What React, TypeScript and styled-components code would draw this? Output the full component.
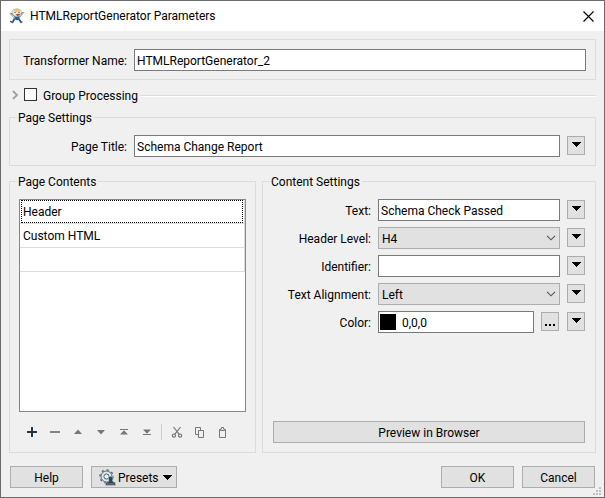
import React from "react";
import styled, { createGlobalStyle, css } from "styled-components";

const GlobalStyle = createGlobalStyle`
  *, *::before, *::after { box-sizing: border-box; }
  body { margin: 0; background: #f0f0f0; }
  body, button, input, select {
    font-family: Roboto, "Open Sans", sans-serif;
    font-size: 12px;
    line-height: 16px;
    color: #000;
  }
`;

const Dialog = styled.main`
  display: flex;
  flex-direction: column;
  min-height: 100vh;
  border: 1px solid #6b6b6b;
  background: #f0f0f0;
`;

const TitleBar = styled.header`
  display: flex;
  align-items: center;
  height: 30px;
  padding: 0 8px;
  gap: 5px;
  background: #fff;
`;

const Title = styled.h1`
  flex: 1;
  margin: 0;
  font-size: 12px;
  font-weight: 400;
  line-height: 16px;
`;

const CloseButton = styled.button`
  display: flex;
  padding: 2px;
  border: 0;
  background: none;
`;

const Body = styled.form`
  position: relative;
  flex: 1;
  display: flex;
  flex-direction: column;
  padding: 8px 8px 9px;
`;

const Panel = styled.div`
  padding: 9px 9px 8px 10px;
  border: 1px solid #dcdcdc;
`;

const Group = styled.fieldset<{ $inset?: number; $bottom?: number }>`
  display: flex;
  flex-direction: column;
  min-width: 0;
  margin: 0;
  padding: 9px ${(p) => p.$inset ?? 10}px ${(p) => p.$bottom ?? 9}px;
  border: 1px solid #dcdcdc;
`;

const Legend = styled.legend<{ $inset?: number }>`
  margin-left: ${(p) => (p.$inset === 9 ? -2 : -3)}px;
  padding: 2px 2px 0 1px;
  line-height: 15px;
`;

const Field = styled.div<{ $label: number }>`
  display: grid;
  grid-template-columns: ${(p) => p.$label}px minmax(0, 1fr);
  align-items: center;
  column-gap: 7px;
`;

const FieldLabel = styled.label`
  padding-top: 2px;
  text-align: right;
  white-space: nowrap;
`;

const Controls = styled.div`
  display: flex;
  align-items: center;
  gap: 7px;
`;

const boxed = css`
  flex: 1;
  width: 100%;
  min-width: 0;
  height: 22px;
  border: 1px solid #7a7a7a;
  border-radius: 0;
  outline: 0;
  background: #fff;
`;

const TextInput = styled.input`
  ${boxed}
  padding: 2px 2px 0;
`;

const SelectWrap = styled.div`
  flex: 1;
  display: grid;
  align-items: center;
  > * { grid-area: 1 / 1; }
  > svg { justify-self: end; margin-right: 4px; pointer-events: none; }
`;

const Select = styled.select`
  ${boxed}
  appearance: none;
  padding: 2px 20px 0 3px;
  border-color: #adadad;
  background: #e1e1e1;
`;

const ColorBox = styled.div`
  ${boxed}
  display: flex;
  align-items: center;
  gap: 4px;
  padding: 0 1px;
`;

const Swatch = styled.span`
  width: 16px;
  height: 16px;
  background: #000;
`;

const ColorInput = styled.input`
  flex: 1;
  min-width: 0;
  padding: 2px 2px 0;
  border: 0;
  outline: 0;
`;

const PushButton = styled.button<{ $width?: number }>`
  display: flex;
  align-items: center;
  justify-content: center;
  width: ${(p) => (p.$width ? `${p.$width}px` : "100%")};
  height: 22px;
  padding: 2px 0 0;
  border: 1px solid #adadad;
  background: #e1e1e1;
`;

const SmallButton = styled(PushButton)`
  flex: none;
  width: 18px;
  height: 19px;
  margin-bottom: 1px;
  padding: 0 0 2px;
`;

const BrowseButton = styled(SmallButton)`
  align-items: flex-end;
  margin-right: 1px;
  padding-bottom: 4px;
`;

const GroupRow = styled.div`
  display: flex;
  align-items: center;
  height: 29px;
  padding-left: 3px;
`;

const GroupLabel = styled.label`
  padding-top: 2px;
`;

const Check = styled.input`
  appearance: none;
  width: 13px;
  height: 13px;
  margin: 0 6px 0 5px;
  border: 1px solid #333;
  background: #fff;
`;

const Rule = styled.hr`
  flex: 1;
  height: 2px;
  margin: 2px 0 0 2px;
  border: 0;
  border-top: 1px solid #dcdcdc;
  border-bottom: 1px solid #fff;
`;

const Columns = styled.div`
  flex: 1;
  display: grid;
  grid-template-columns: 247fr 334fr;
  gap: 6px;
  margin-top: 7px;
`;

const ContentList = styled.ul`
  flex: 1;
  margin: 0 0 9px;
  padding: 0;
  border: 1px solid #828790;
  background: #fff;
  list-style: none;
`;

const ContentItem = styled.li<{ $focused?: boolean }>`
  height: 24px;
  padding: 0 1px;
  border: solid #dcdcdc;
  border-width: 0 1px 1px 0;

  > span {
    display: block;
    height: 23px;
    padding: 0 1px;
    border: 1px ${(p) => (p.$focused ? "dotted #000" : "solid transparent")};
    line-height: 23px;
  }
`;

const ToolBar = styled.div`
  display: flex;
  align-items: center;
  height: 22px;
  padding-left: 1px;
`;

const ToolButton = styled.button`
  display: flex;
  justify-content: center;
  width: 23px;
  padding: 0;
  border: 0;
  background: none;
`;

const ToolDivider = styled.span`
  width: 1px;
  height: 16px;
  margin: 0 3px;
  background: #cfcfcf;
`;

const SettingsRows = styled.div`
  display: grid;
  gap: 6px;
  margin-bottom: auto;
`;

const Footer = styled.footer`
  display: flex;
  gap: 8px;
  margin-top: 13px;
  padding: 0 1px;
`;

const Spacer = styled.span`
  flex: 1;
`;

const PresetsButton = styled(PushButton)`
  justify-content: flex-start;
  padding: 0 0 0 7px;
  > span { flex: 1; padding: 2px 0 0 2px; text-align: left; }
  > svg:last-child { margin-right: 4px; }
`;

const Grip = styled.svg`
  position: absolute;
  right: 3px;
  bottom: 2px;
`;

const DownTriangle = () => (
  <svg width="9" height="5" viewBox="0 0 9 5" shapeRendering="crispEdges">
    <path d="M0 0H9V1H8V2H7V3H6V4H5V5H4V4H3V3H2V2H1V1H0Z" fill="#000" />
  </svg>
);

const Chevron = () => (
  <svg width="10" height="6" viewBox="0 0 10 6">
    <path d="M1 .8 5 4.8 9 .8" fill="none" stroke="#555" strokeWidth="1.1" />
  </svg>
);

const MascotIcon = () => (
  <svg width="16" height="16" viewBox="0 0 16 16">
    <path d="M5.5 10.5 3.6 14.3M9.5 10.5 12 14.2" stroke="#2459a8" strokeWidth="1.8" />
    <path d="M5.5 8H10.5V11L8 12.5 5.5 11Z" fill="#2c5ca6" />
    <path d="M.3 5.2 2.6 4.7 6 8.2 4.7 9.8ZM15.4 4.2 13 4.2 9.5 8 11 9.5Z" fill="#777" />
    <path d="M1.2 5.8 5 9M14.5 4.8 11 8.5" stroke="#eadcc6" />
    <path d="M3 3.7Q4 .6 8 .7T12.5 4L11.8 7Q8 10.3 4.2 7Z" fill="#e8ebea" stroke="#a89e8e" strokeWidth=".6" />
    <path d="M4.3 2.7Q7.5-.6 11.5 2.7L10 3.7H6Z" fill="#edc25c" />
    <path d="M5 4.5H7M9 4.5H11" stroke="#8a949a" />
    <path d="M6.5 6.8Q8.5 5.4 11.5 6L9 8.2Z" fill="#d53c27" />
    <path d="M1 13.2 3.8 14.8M11.5 14.8 13.4 13.5" stroke="#665447" strokeWidth="1.4" />
  </svg>
);

const PresetIcon = () => (
  <svg width="17" height="17" viewBox="0 0 17 17">
    <circle cx="7.5" cy="7.5" r="5.5" fill="#dce8ec" stroke="#4d626e" strokeWidth="1" />
    <circle cx="7.5" cy="7.5" r="6.6" fill="none" stroke="#4d626e" strokeWidth="1.3" strokeDasharray="2.2 2.98" />
    <circle cx="7.5" cy="7.5" r="2.6" fill="#efefef" stroke="#4d626e" strokeWidth="1" />
    <path d="M6.6 16.4V13.8L9.8 12.2Q8.5 7.2 11.7 7.2T13.6 12.2L16.6 13.8V16.4Z" fill="#2d4656" stroke="#e1e1e1" strokeWidth=".5" />
    <path d="M8 14.9H15.4" stroke="#8299a5" strokeWidth=".8" />
  </svg>
);

const toolIcons: Record<string, React.ReactNode> = {
  Add: <path d="M3 8H13M8 3V13" stroke="#213746" strokeWidth="2" />,
  Remove: <path d="M3 8H13" stroke="#858585" strokeWidth="2" />,
  "Move up": <path d="M4 10 8 5.6 12 10Z" fill="#777" />,
  "Move down": <path d="M4 6 8 10.4 12 6Z" fill="#777" />,
  "Move to top": <path d="M4 5H12V6H4ZM4 10.4 8 6.2 12 10.4Z" fill="#777" />,
  "Move to bottom": <path d="M4 10H12V11H4ZM4 5.6 8 9.8 12 5.6Z" fill="#777" />,
};

const editIcons: Record<string, React.ReactNode> = {
  Cut: (
    <g fill="none" stroke="#777" strokeWidth="1.2">
      <path d="M4.5 3 10.3 10.3M11.5 3 5.7 10.3" />
      <circle cx="4.9" cy="11.6" r="1.6" />
      <circle cx="11.1" cy="11.6" r="1.6" />
    </g>
  ),
  Copy: (
    <g fill="#f0f0f0" stroke="#777">
      <path d="M3.5 3.5H8.5V10.5H3.5Z" />
      <path d="M6.5 6.5H11.5V13.5H6.5Z" />
    </g>
  ),
  Paste: (
    <g fill="none" stroke="#777">
      <path d="M4.5 5.5H10.5V13.5H4.5Z" />
      <path d="M5.5 6.5V5H6.5V3.5H8.5V5H9.5V6.5Z" fill="#f0f0f0" />
    </g>
  ),
};

const renderTools = (icons: Record<string, React.ReactNode>) =>
  Object.entries(icons).map(([name, drawing]) => (
    <ToolButton key={name} type="button" aria-label={name}>
      <svg width="16" height="16" viewBox="0 0 16 16">{drawing}</svg>
    </ToolButton>
  ));

const MenuButton = ({ label }: { label: string }) => (
  <SmallButton type="button" aria-label={`${label} options`}>
    <DownTriangle />
  </SmallButton>
);

interface SettingProps {
  id: string;
  label: string;
  labelWidth?: number;
  children: React.ReactNode;
}

const Setting = ({ id, label, labelWidth = 98, children }: SettingProps) => (
  <Field $label={labelWidth}>
    <FieldLabel htmlFor={id}>{label}:</FieldLabel>
    <Controls>
      {children}
      <MenuButton label={label} />
    </Controls>
  </Field>
);

export default function App() {
  return (
    <>
      <GlobalStyle />
      <Dialog>
        <TitleBar>
          <MascotIcon />
          <Title>HTMLReportGenerator Parameters</Title>
          <CloseButton type="button" aria-label="Close">
            <svg width="11" height="11" viewBox="0 0 11 11">
              <path d="M.5.5 10.5 10.5M10.5.5.5 10.5" stroke="#000" strokeWidth="1.1" />
            </svg>
          </CloseButton>
        </TitleBar>
        <Body onSubmit={(e) => e.preventDefault()}>
          <Panel>
            <Field $label={107}>
              <FieldLabel htmlFor="name">Transformer Name:</FieldLabel>
              <TextInput id="name" defaultValue="HTMLReportGenerator_2" />
            </Field>
          </Panel>

          <GroupRow>
            <svg width="7" height="10" viewBox="0 0 7 10">
              <path d="M1 1 5 5 1 9" fill="none" stroke="#a0a0a0" strokeWidth="1.8" />
            </svg>
            <Check id="group" type="checkbox" />
            <GroupLabel htmlFor="group">Group Processing</GroupLabel>
            <Rule />
          </GroupRow>

          <Group $bottom={8}>
            <Legend>Page Settings</Legend>
            <Setting id="title" label="Page Title" labelWidth={107}>
              <TextInput id="title" defaultValue="Schema Change Report" />
            </Setting>
          </Group>

          <Columns>
            <Group $inset={9}>
              <Legend $inset={9}>Page Contents</Legend>
              <ContentList role="listbox" aria-label="Page Contents">
                <ContentItem role="option" $focused><span>Header</span></ContentItem>
                <ContentItem role="option"><span>Custom HTML</span></ContentItem>
                <ContentItem role="option"><span /></ContentItem>
              </ContentList>
              <ToolBar>
                {renderTools(toolIcons)}
                <ToolDivider />
                {renderTools(editIcons)}
              </ToolBar>
            </Group>

            <Group>
              <Legend>Content Settings</Legend>
              <SettingsRows>
                <Setting id="text" label="Text">
                  <TextInput id="text" defaultValue="Schema Check Passed" />
                </Setting>
                <Setting id="level" label="Header Level">
                  <SelectWrap>
                    <Select id="level"><option>H4</option></Select>
                    <Chevron />
                  </SelectWrap>
                </Setting>
                <Setting id="identifier" label="Identifier">
                  <TextInput id="identifier" />
                </Setting>
                <Setting id="align" label="Text Alignment">
                  <SelectWrap>
                    <Select id="align"><option>Left</option></Select>
                    <Chevron />
                  </SelectWrap>
                </Setting>
                <Setting id="color" label="Color">
                  <ColorBox>
                    <Swatch />
                    <ColorInput id="color" defaultValue="0,0,0" />
                  </ColorBox>
                  <BrowseButton type="button" aria-label="Choose color">
                    <svg width="10" height="2" viewBox="0 0 10 2">
                      <path d="M0 0H2V2H0ZM4 0H6V2H4ZM8 0H10V2H8Z" fill="#000" />
                    </svg>
                  </BrowseButton>
                </Setting>
              </SettingsRows>
              <PushButton type="button">Preview in Browser</PushButton>
            </Group>
          </Columns>

          <Footer>
            <PushButton type="button" $width={73}>Help</PushButton>
            <PresetsButton type="button" $width={86}>
              <PresetIcon />
              <span>Presets</span>
              <DownTriangle />
            </PresetsButton>
            <Spacer />
            <PushButton type="submit" $width={73}>OK</PushButton>
            <PushButton type="button" $width={73}>Cancel</PushButton>
          </Footer>
          <Grip width="8" height="8" viewBox="0 0 8 8">
            <path d="M6 0H8V2H6ZM3 3H5V5H3ZM6 3H8V5H6ZM0 6H2V8H0ZM3 6H5V8H3ZM6 6H8V8H6Z" fill="#bfbfbf" />
          </Grip>
        </Body>
      </Dialog>
    </>
  );
}
